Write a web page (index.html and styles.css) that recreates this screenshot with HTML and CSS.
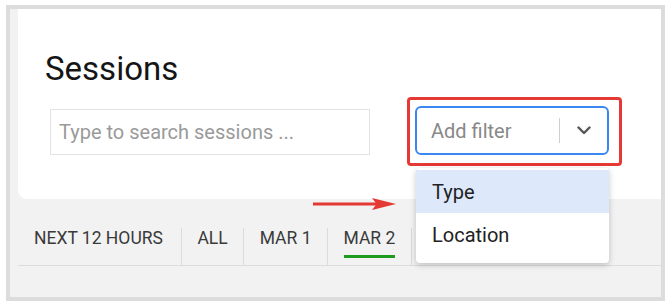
FILE: index.html
```html
<!DOCTYPE html>
<html>
<head>
<meta charset="utf-8">
<link rel="stylesheet" href="styles.css">
</head>
<body>
<div class="frame">
  <div class="card">
    <h1 class="title">Sessions</h1>
    <div class="filters">
      <div class="search">Type to search sessions ...</div>
      <div class="highlight">
        <div class="select">
          <span class="select-label">Add filter</span>
          <span class="select-sep"></span>
          <svg class="chev" width="14" height="9" viewBox="0 0 14 9"><path d="M1.5 1.5 L7 7 L12.5 1.5" fill="none" stroke="#555" stroke-width="2.4" stroke-linecap="round" stroke-linejoin="round"/></svg>
        </div>
        <div class="menu">
          <div class="menu-item active">Type</div>
          <div class="menu-item">Location</div>
        </div>
      </div>
    </div>
  </div>
  <div class="tabs">
    <div class="tab">NEXT 12 HOURS</div>
    <div class="tab">ALL</div>
    <div class="tab">MAR 1</div>
    <div class="tab current"><span class="tab-text">MAR 2</span></div>
    <div class="tab"></div>
  </div>
  <svg class="arrow" width="84" height="14" viewBox="0 0 84 14"><path d="M0 5.5 H64 V8.5 H0 Z" fill="#e53935"/><path d="M59 1 L83 7 L59 13 L63.5 7 Z" fill="#e53935"/></svg>
</div>
</body>
</html>
```

FILE: styles.css
```css
* { box-sizing: border-box; }
html, body { margin: 0; padding: 0; background: #ffffff; }
body { font-family: Roboto, "Noto Sans", Arial, sans-serif; }

.frame {
  position: relative;
  margin: 5px 0 0 6px;
  width: 659px;
  height: 296px;
  border: 4px solid #dcdcdc;
  background: #f2f2f2;
  padding-left: 8px;
  overflow: hidden;
}

.card {
  background: #ffffff;
  height: 190px;
  border-bottom-left-radius: 9px;
  padding: 41px 0 0 27px;
}

.title {
  margin: 0;
  font-size: 33px;
  font-weight: 400;
  color: #151515;
  line-height: 37.5px;
}

.filters {
  display: flex;
  align-items: center;
  margin-top: 9.5px;
  padding-left: 5px;
}

.search {
  width: 320px;
  height: 46px;
  border: 1px solid #e2e2e2;
  padding-left: 8px;
  display: flex;
  align-items: center;
  font-size: 20px;
  color: #9a9a9a;
}

.highlight {
  position: relative;
  margin-left: 37px;
  border: 3px solid #e53935;
  border-radius: 4px;
  padding: 6px 10px 8px 5px;
}

.select {
  width: 194px;
  height: 49px;
  border: 2px solid #3b87f2;
  border-radius: 6px;
  display: flex;
  align-items: center;
  padding-left: 14px;
}

.select-label {
  font-size: 20px;
  color: #888888;
  width: 128px;
}

.select-sep {
  width: 1px;
  height: 25px;
  background: #cfcfcf;
}

.chev {
  margin-left: 17px;
}

.menu {
  position: absolute;
  left: 6px;
  top: 68px;
  width: 193px;
  background: #ffffff;
  border-radius: 4px;
  box-shadow: 0 2px 6px rgba(0, 0, 0, 0.22);
  padding: 2px 0 7px;
  z-index: 2;
}

.menu-item {
  height: 43px;
  display: flex;
  align-items: center;
  padding-left: 16px;
  font-size: 20px;
  color: #222222;
}

.menu-item.active {
  background: #dde9fb;
}

.tabs {
  display: flex;
  margin-top: 29px;
  height: 38px;
  border-bottom: 1px solid #dcdcdc;
  padding-left: 16px;
}

.tab {
  height: 37px;
  padding: 0 15.5px;
  font-size: 17.5px;
  line-height: 20px;
  color: #3a3a3a;
  border-left: 1px solid #dcdcdc;
}

.tab:first-child {
  border-left: none;
  padding-left: 0;
  padding-right: 18px;
}

.tab.current .tab-text {
  display: inline-block;
  padding-bottom: 7px;
  border-bottom: 3px solid #1e9a1e;
}

.arrow {
  position: absolute;
  left: 303px;
  top: 188px;
}
```
